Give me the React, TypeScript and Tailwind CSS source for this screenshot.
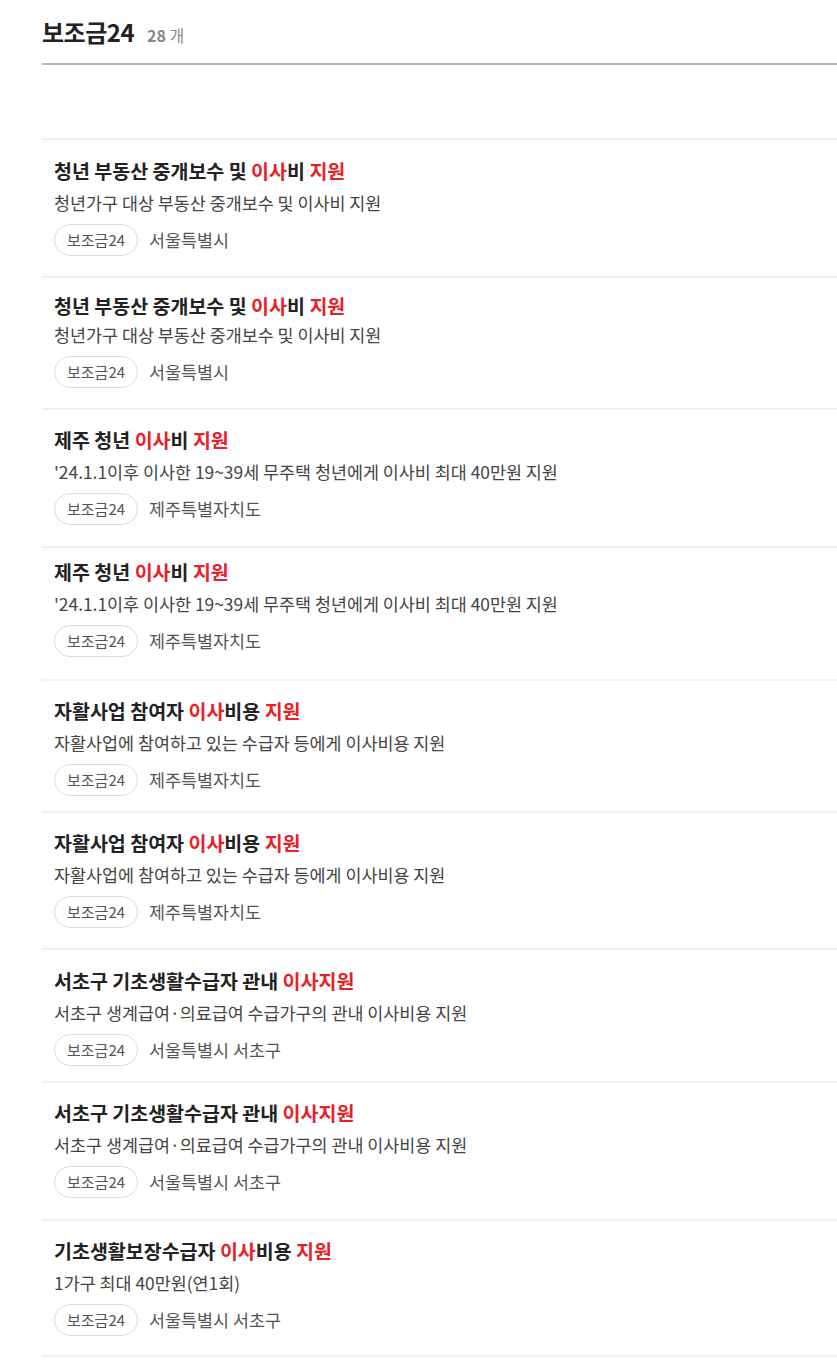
import React from "react";

type Part = { t: string; red?: boolean };

interface IItem {
  title: Part[];
  desc: string;
  region: string;
  pad: string;
  glitch?: boolean;
}

const items: IItem[] = [
  {
    title: [{ t: "청년 부동산 중개보수 및 " }, { t: "이사", red: true }, { t: "비 " }, { t: "지원", red: true }],
    desc: "청년가구 대상 부동산 중개보수 및 이사비 지원",
    region: "서울특별시",
    pad: "pt-[19px] pb-[20px]",
  },
  {
    title: [{ t: "청년 부동산 중개보수 및 " }, { t: "이사", red: true }, { t: "비 " }, { t: "지원", red: true }],
    desc: "청년가구 대상 부동산 중개보수 및 이사비 지원",
    region: "서울특별시",
    pad: "pt-[19px] pb-[20px]",
    glitch: true,
  },
  {
    title: [{ t: "제주 청년 " }, { t: "이사", red: true }, { t: "비 " }, { t: "지원", red: true }],
    desc: "'24.1.1이후 이사한 19~39세 무주택 청년에게 이사비 최대 40만원 지원",
    region: "제주특별자치도",
    pad: "pt-[18px] pb-[21px]",
  },
  {
    title: [{ t: "제주 청년 " }, { t: "이사", red: true }, { t: "비 " }, { t: "지원", red: true }],
    desc: "'24.1.1이후 이사한 19~39세 무주택 청년에게 이사비 최대 40만원 지원",
    region: "제주특별자치도",
    pad: "pt-[12px] pb-[22px]",
  },
  {
    title: [{ t: "자활사업 참여자 " }, { t: "이사", red: true }, { t: "비용 " }, { t: "지원", red: true }],
    desc: "자활사업에 참여하고 있는 수급자 등에게 이사비용 지원",
    region: "제주특별자치도",
    pad: "pt-[18px] pb-[15px]",
  },
  {
    title: [{ t: "자활사업 참여자 " }, { t: "이사", red: true }, { t: "비용 " }, { t: "지원", red: true }],
    desc: "자활사업에 참여하고 있는 수급자 등에게 이사비용 지원",
    region: "제주특별자치도",
    pad: "pt-[18px] pb-[20px]",
  },
  {
    title: [{ t: "서초구 기초생활수급자 관내 " }, { t: "이사지원", red: true }],
    desc: "서초구 생계급여·의료급여 수급가구의 관내 이사비용 지원",
    region: "서울특별시 서초구",
    pad: "pt-[19px] pb-[15px]",
  },
  {
    title: [{ t: "서초구 기초생활수급자 관내 " }, { t: "이사지원", red: true }],
    desc: "서초구 생계급여·의료급여 수급가구의 관내 이사비용 지원",
    region: "서울특별시 서초구",
    pad: "pt-[18px] pb-[21px]",
  },
  {
    title: [{ t: "기초생활보장수급자 " }, { t: "이사", red: true }, { t: "비용 " }, { t: "지원", red: true }],
    desc: "1가구 최대 40만원(연1회)",
    region: "서울특별시 서초구",
    pad: "pt-[18px] pb-[19px]",
  },
];

const Title = ({ parts, tight }: { parts: Part[]; tight?: boolean }) => (
  <h3
    className={
      tight
        ? "text-[19.5px] leading-[18px] font-bold text-[#222] whitespace-nowrap"
        : "text-[19.5px] leading-[24px] font-bold text-[#222] whitespace-nowrap"
    }
  >
    {parts.map((p, idx) => (
      <span key={idx} className={p.red ? "text-[#e8202a]" : ""}>
        {p.t}
      </span>
    ))}
  </h3>
);

const App = () => {
  return (
    <div className="min-h-[1366px] bg-white pl-[42px] font-['Noto_Sans_CJK_KR','Noto_Sans',sans-serif] overflow-hidden">
      <div className="flex items-baseline gap-[13px] pt-[17px] pb-[16px] border-b-2 border-[#b3b3b3]">
        <h2 className="text-[24px] leading-[30px] font-bold text-[#222] tracking-[-0.5px]">보조금24</h2>
        <span className="text-[16px] font-bold text-[#888]">
          28 <span className="font-normal">개</span>
        </span>
      </div>

      <ul className="mt-[73px] border-t-2 border-[#f1f1f1]">
        {items.map((item, idx) => (
          <li key={idx} className={`pl-[12px] border-b-2 border-[#f1f1f1] ${item.pad}`}>
            <Title parts={item.title} tight={item.glitch} />
            <p className="mt-[8px] text-[17.4px] leading-[24px] text-[#444] whitespace-nowrap">{item.desc}</p>
            <div className="mt-[9px] flex items-center gap-[11px]">
              <span className="h-[32px] px-[12px] flex items-center rounded-full border border-[#dcdcdc] text-[15px] text-[#555]">
                보조금24
              </span>
              <span className="text-[17.4px] text-[#555]">{item.region}</span>
            </div>
          </li>
        ))}
      </ul>
    </div>
  );
};

export default App;
